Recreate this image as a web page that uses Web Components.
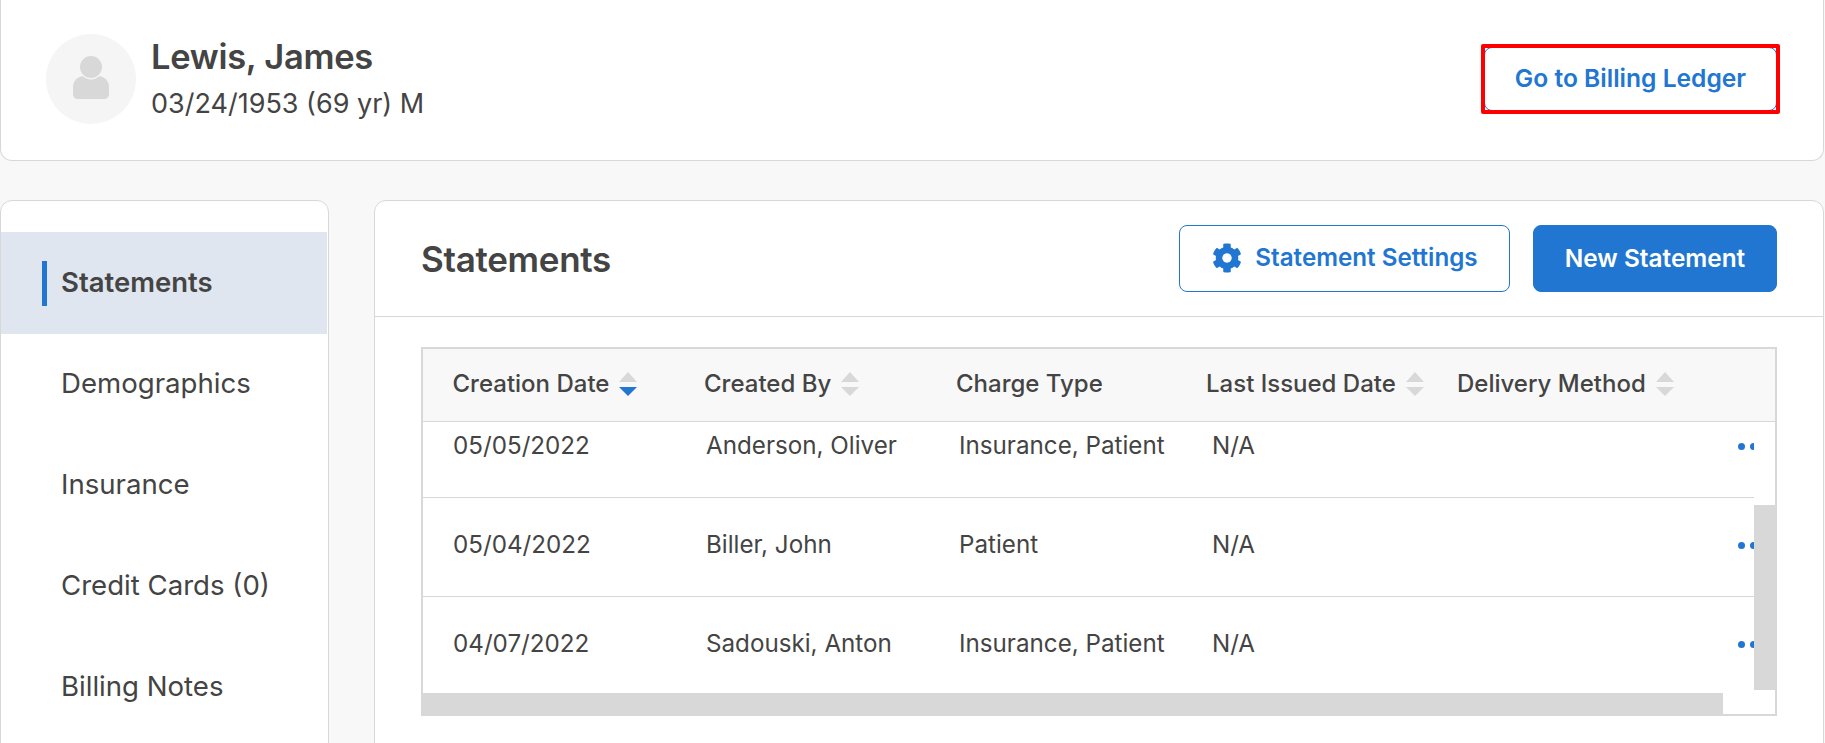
<!DOCTYPE html>
<html>
<head>
<meta charset="utf-8">
<title>Statements</title>
<style>
  html, body { margin: 0; height: 100%; overflow: hidden; }
  body {
    background: #f8f8f8;
    color: #444;
    font-family: Inter, "Liberation Sans", sans-serif;
  }
</style>
</head>
<body>
<billing-page>
  <patient-banner slot="banner" name="Lewis, James" details="03/24/1953 (69 yr) M" action="Go to Billing Ledger"></patient-banner>
  <billing-nav slot="nav">
    <nav-item active>Statements</nav-item>
    <nav-item>Demographics</nav-item>
    <nav-item>Insurance</nav-item>
    <nav-item>Credit Cards (0)</nav-item>
    <nav-item>Billing Notes</nav-item>
  </billing-nav>
  <statements-panel slot="main" heading="Statements">
    <statement-table>
      <sort-header slot="head" state="down">Creation Date</sort-header>
      <sort-header slot="head" state="none">Created By</sort-header>
      <sort-header slot="head">Charge Type</sort-header>
      <sort-header slot="head" state="none">Last Issued Date</sort-header>
      <sort-header slot="head" state="none">Delivery Method</sort-header>
      <statement-row date="05/05/2022" by="Anderson, Oliver" type="Insurance, Patient" issued="N/A"></statement-row>
      <statement-row date="05/04/2022" by="Biller, John" type="Patient" issued="N/A"></statement-row>
      <statement-row date="04/07/2022" by="Sadouski, Anton" type="Insurance, Patient" issued="N/A"></statement-row>
    </statement-table>
  </statements-panel>
</billing-page>

<script>
  const BLUE = "#2176d2";
  const LINE = "#d8d8d8";

  class BaseElement extends HTMLElement {
    constructor() {
      super();
      this.attachShadow({ mode: "open" });
    }
    connectedCallback() {
      this.shadowRoot.innerHTML = this.render();
    }
  }

  class BillingPage extends BaseElement {
    render() {
      return `
        <style>
          :host { display: block; height: 743px; overflow: hidden; }
          .columns {
            display: grid;
            grid-template-columns: 329px 1fr;
            column-gap: 45px;
            margin-top: 39px;
            margin-right: 1px;
          }
        </style>
        <slot name="banner"></slot>
        <div class="columns">
          <slot name="nav"></slot>
          <slot name="main"></slot>
        </div>
      `;
    }
  }

  class PatientBanner extends BaseElement {
    render() {
      return `
        <style>
          :host {
            display: flex;
            align-items: center;
            box-sizing: border-box;
            height: 161px;
            margin-right: 1px;
            padding: 0 43px 0 45px;
            background: #fff;
            border: 1px solid ${LINE};
            border-top: 0;
            border-radius: 0 0 12px 12px;
          }
          .avatar {
            width: 90px;
            height: 90px;
            margin-bottom: 2px;
            border-radius: 50%;
            background: #f5f5f5;
            display: flex;
            align-items: center;
            justify-content: center;
            flex-shrink: 0;
          }
          .avatar svg { margin-bottom: 3px; }
          .who { margin-left: 15px; padding-bottom: 3.500px; flex: 1; }
          .name { font-size: 34.500px; line-height: 42px; font-weight: 600; letter-spacing: -0.3px; color: #444; }
          .details { font-size: 27px; line-height: 34px; margin-top: 8.500px; color: #444; }
          .mark { position: relative; display: flex; padding: 3px; margin-bottom: 3px; }
          /* the red box is an annotation drawn over the button */
          .mark::after {
            content: "";
            position: absolute;
            inset: 0;
            border: 4px solid #f00;
            border-radius: 2px;
          }
          .ledger {
            box-sizing: border-box;
            width: 293px;
            height: 64px;
            padding-bottom: 2px;
            display: flex;
            align-items: center;
            justify-content: center;
            border: 1px solid ${BLUE};
            border-radius: 8px;
            background: #fff;
            color: ${BLUE};
            font-size: 24.600px;
            font-weight: 600;
          }
        </style>
        <div class="avatar">
          <svg width="36" height="43" viewBox="0 0 36 43">
            <path d="M11 20h14c6.5 0 11 5 11 11v7c0 3-2 5-5 5H5c-3 0-5-2-5-5v-7c0-6 4.500-11 11-11z" fill="${LINE}"/>
            <circle cx="18" cy="11" r="11.7" fill="${LINE}" stroke="#f5f5f5" stroke-width="1.400"/>
          </svg>
        </div>
        <div class="who">
          <div class="name">${this.getAttribute("name")}</div>
          <div class="details">${this.getAttribute("details")}</div>
        </div>
        <div class="mark"><div class="ledger">${this.getAttribute("action")}</div></div>
      `;
    }
  }

  class BillingNav extends BaseElement {
    render() {
      return `
        <style>
          :host {
            display: block;
            box-sizing: border-box;
            height: 600px;
            padding: 31px 1px 0 0;
            background: #fff;
            border: 1px solid ${LINE};
            border-radius: 12px 12px 0 0;
          }
        </style>
        <slot></slot>
      `;
    }
  }

  class NavItem extends BaseElement {
    render() {
      return `
        <style>
          :host {
            display: flex;
            align-items: center;
            gap: 14px;
            height: 101px;
            padding-left: 41px;
            font-size: 27.600px;
            color: #444;
          }
          :host([active]) { height: 102px; background: #e0e6ef; font-weight: 600; font-size: 27.500px; }
          .bar { width: 5px; height: 45px; }
          :host([active]) .bar { background: ${BLUE}; }
          slot { display: block; margin-bottom: 3px; }
        </style>
        <span class="bar"></span>
        <div><slot></slot></div>
      `;
    }
  }

  class StatementsPanel extends BaseElement {
    render() {
      return `
        <style>
          :host {
            display: block;
            box-sizing: border-box;
            height: 600px;
            background: #fff;
            border: 1px solid ${LINE};
            border-radius: 12px 12px 0 0;
          }
          .head {
            display: flex;
            align-items: center;
            box-sizing: border-box;
            height: 116px;
            padding: 0 46px;
            border-bottom: 1px solid ${LINE};
          }
          h2 { flex: 1; margin: 0; font-size: 35px; font-weight: 600; letter-spacing: -0.3px; color: #444; }
          .btn {
            box-sizing: border-box;
            height: 67px;
            padding-bottom: 2px;
            display: flex;
            align-items: center;
            justify-content: center;
            gap: 13px;
            border: 1px solid ${BLUE};
            border-radius: 8px;
            font-weight: 600;
            color: ${BLUE};
          }
          .settings { width: 331px; margin-right: 23px; padding-left: 4px; background: #fff; font-size: 24.200px; }
          .new { width: 244px; background: ${BLUE}; color: #fff; font-size: 24.400px; }
          svg { width: 30px; height: 30px; fill: ${BLUE}; display: block; margin-left: -3px; }
          .body { padding: 30px 46px 0; }
        </style>
        <div class="head">
          <h2>${this.getAttribute("heading")}</h2>
          <div class="btn settings">
            <svg viewBox="0 0 512 512"><path d="M487.4 315.7l-42.6-24.6c4.3-23.2 4.3-47 0-70.2l42.6-24.6c4.9-2.8 7.1-8.6 5.500-14-11.100-35.6-30-67.8-54.700-94.6-3.800-4.100-10-5.100-14.800-2.300L380.800 110c-17.900-15.400-38.500-27.300-60.800-35.100V25.800c0-5.600-3.900-10.500-9.400-11.700-36.700-8.200-74.300-7.800-109.200 0-5.500 1.200-9.400 6.100-9.400 11.700V75c-22.200 7.900-42.800 19.800-60.800 35.100L88.700 85.500c-4.900-2.800-11-1.900-14.800 2.300-24.700 26.700-43.600 58.900-54.700 94.600-1.700 5.400.6 11.200 5.500 14L67.300 221c-4.300 23.200-4.300 47 0 70.200l-42.600 24.600c-4.900 2.800-7.100 8.600-5.500 14 11.100 35.600 30 67.800 54.700 94.600 3.800 4.100 10 5.100 14.800 2.300l42.600-24.600c17.900 15.400 38.500 27.300 60.800 35.100v49.200c0 5.600 3.900 10.500 9.400 11.700 36.700 8.200 74.300 7.800 109.200 0 5.500-1.200 9.400-6.100 9.400-11.700v-49.200c22.200-7.900 42.800-19.800 60.800-35.100l42.600 24.600c4.900 2.800 11 1.900 14.800-2.300 24.700-26.700 43.600-58.900 54.700-94.600 1.500-5.500-.7-11.300-5.600-14.100zM256 336c-44.100 0-80-35.900-80-80s35.900-80 80-80 80 35.900 80 80-35.900 80-80 80z"/></svg>
            Statement Settings
          </div>
          <div class="btn new">New Statement</div>
        </div>
        <div class="body"><slot></slot></div>
      `;
    }
  }

  class StatementTable extends BaseElement {
    render() {
      return `
        <style>
          :host {
            display: block;
            box-sizing: border-box;
            height: 369px;
            background: #fff;
            border: 2px solid ${LINE};
          }
          .head {
            display: grid;
            grid-template-columns: 251.500px 252px 250px 251px 1fr;
            align-items: center;
            box-sizing: border-box;
            height: 73px;
            padding-left: 29.500px;
            background: #f8f8f8;
            border-bottom: 1px solid ${LINE};
          }
          .scroller {
            display: grid;
            grid-template-columns: 1fr 21px;
            grid-template-rows: 271px 21px;
          }
          .rows { overflow: hidden; }
          .rows-inner { margin-top: -23px; width: 1331px; }
          .vtrack { padding-top: 83px; }
          .vthumb { height: 185px; background: ${LINE}; }
          .hthumb { width: 1300px; height: 21px; background: ${LINE}; }
        </style>
        <div class="head"><slot name="head"></slot></div>
        <div class="scroller">
          <div class="rows"><div class="rows-inner"><slot></slot></div></div>
          <div class="vtrack"><div class="vthumb"></div></div>
          <div class="hthumb"></div>
        </div>
      `;
    }
  }

  class SortHeader extends BaseElement {
    render() {
      const state = this.getAttribute("state");
      const lower = state === "down" ? BLUE : LINE;
      const arrows = state
        ? `<svg width="18" height="24" viewBox="0 0 18 24">
             <path d="M9 0l9 10H0z" fill="${LINE}"/>
             <path d="M0 15h18l-9 9z" fill="${lower}"/>
           </svg>`
        : "";
      return `
        <style>
          :host {
            display: flex;
            align-items: center;
            gap: 10px;
            padding-bottom: 3px;
            font-size: 24px;
            font-weight: 500;
            white-space: nowrap;
            color: #444;
          }
          svg { display: block; flex-shrink: 0; }
        </style>
        <slot></slot>${arrows}
      `;
    }
  }

  class StatementRow extends BaseElement {
    render() {
      return `
        <style>
          :host {
            display: grid;
            grid-template-columns: 253px 253px 253px 525.500px 40px;
            align-items: center;
            box-sizing: border-box;
            height: 99px;
            padding: 0 0 4px 30px;
            border-bottom: 1px solid ${LINE};
            font-size: 24.200px;
            color: #444;
            white-space: nowrap;
          }
          span { margin-bottom: 2px; }
          .dots { display: flex; gap: 5px; margin-bottom: 0; }
          .dots i { width: 7px; height: 7px; border-radius: 50%; background: ${BLUE}; flex-shrink: 0; }
        </style>
        <span>${this.getAttribute("date")}</span>
        <span>${this.getAttribute("by")}</span>
        <span>${this.getAttribute("type")}</span>
        <span>${this.getAttribute("issued")}</span>
        <span class="dots"><i></i><i></i><i></i></span>
      `;
    }
  }

  customElements.define("billing-page", BillingPage);
  customElements.define("patient-banner", PatientBanner);
  customElements.define("billing-nav", BillingNav);
  customElements.define("nav-item", NavItem);
  customElements.define("statements-panel", StatementsPanel);
  customElements.define("statement-table", StatementTable);
  customElements.define("sort-header", SortHeader);
  customElements.define("statement-row", StatementRow);
</script>
</body>
</html>
